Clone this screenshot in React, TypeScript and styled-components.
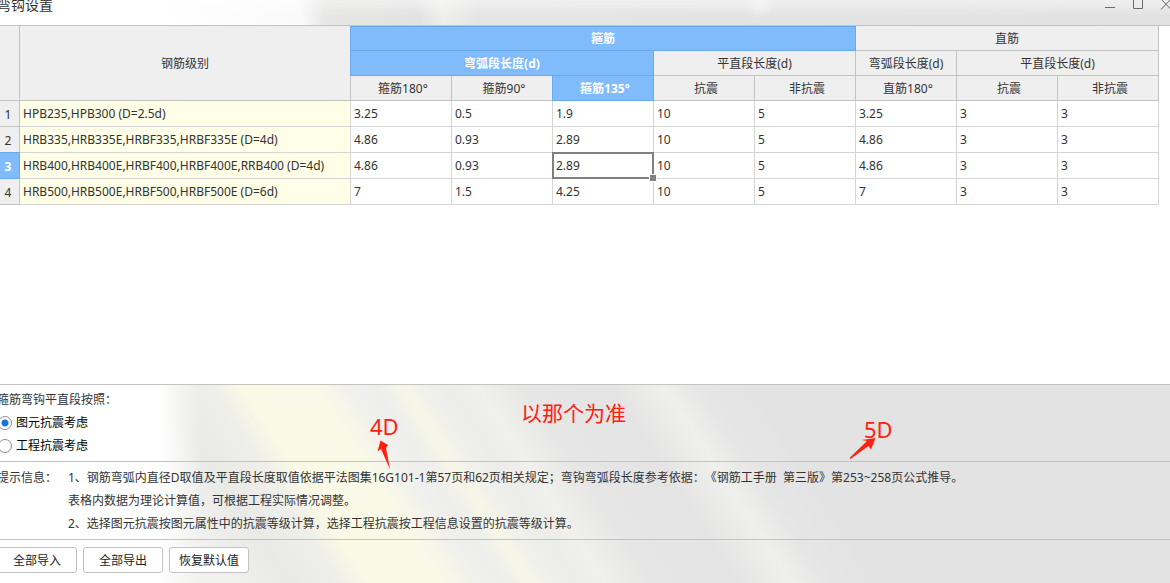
import React, { useState } from "react";
import styled, { createGlobalStyle, css } from "styled-components";

const GlobalStyle = createGlobalStyle`
  * { box-sizing: border-box; }
  body {
    margin: 0;
    overflow: hidden;
    background: #fff;
    color: #333;
    font: 12px/23px "Noto Sans", "Noto Sans CJK SC", sans-serif;
    text-spacing-trim: space-all;
  }
`;

/* The dialog reaches slightly past the top and left screen edges. */
const Dialog = styled.div`
  display: flex;
  flex-direction: column;
  margin: -5px 0 0 -3px;
  min-height: calc(100vh + 5px);
`;

const TitleBar = styled.header`
  display: flex;
  justify-content: space-between;
  align-items: flex-start;
  height: 31px;
  overflow: hidden;
  border-bottom: 1px solid #c3c3c3;
  background:
    radial-gradient(circle 16px at 65% 8px, #f4f4f4, transparent),
    linear-gradient(to bottom, rgba(255, 255, 255, 0.6), transparent 70%),
    linear-gradient(80deg, #fff 14%, #fafafa 26%, #e6e6e4 28%, #e2e2e2 36%, #efefec 38%, #e4e4e4 41%, #e2e2e2);
`;

const Title = styled.h1`
  margin: 0;
  font-size: 14px;
  line-height: 20px;
  font-weight: 400;
`;

const WindowControls = styled.div`
  display: flex;
  margin-right: -10px;
`;

const ControlButton = styled.button`
  width: 28px;
  height: 20px;
  padding: 0;
  border: 0;
  background: none;
  svg { display: block; }
`;

const TableArea = styled.main`
  flex: 1;
  padding-right: 11px;
  background: #fff;
`;

const Grid = styled.table`
  width: 100%;
  table-layout: fixed;
  border-collapse: separate;
  border-spacing: 0;
  line-height: 20px;
`;

const NumberCol = styled.col`width: 23px;`;
const ValueCol = styled.col`width: 101px;`;

const activeHeader = css`
  position: relative;
  background: #80bbfb;
  border-color: #67a9ec;
  color: #fff;
  font-weight: 700;
`;

const HeadCell = styled.th<{ $active?: boolean; $top?: boolean; $leaf?: boolean }>`
  height: 25px;
  padding: 2px 0 0 ${(p) => (p.$leaf ? 4 : 0)}px;
  border: solid #c3c3c3;
  border-width: 0 1px 1px 0;
  background: #efefef;
  font-weight: 400;
  ${(p) => p.$active && activeHeader}
  ${(p) => p.$active && css`box-shadow: -1px 0 0 #67a9ec${p.$top ? ", inset 0 1px 0 #67a9ec" : ""};`}
`;

const RowNumber = styled.th<{ $active?: boolean }>`
  height: 26px;
  padding: 2px 0 0;
  border: solid #c3c3c3;
  border-width: 0 1px 1px 0;
  background: #efefef;
  font-weight: 400;
  ${(p) => p.$active && activeHeader}
  ${(p) => p.$active && css`box-shadow: 0 -1px 0 #67a9ec;`}
`;

const Cell = styled.td<{ $name?: boolean; $selected?: boolean }>`
  height: 26px;
  padding: 0 3px;
  border: solid #d5d5d5;
  border-width: 0 1px 1px 0;
  background: ${(p) => (p.$name ? "#fffee6" : "#fff")};
  white-space: nowrap;
  ${(p) =>
    p.$selected &&
    css`
      position: relative;
      &::before {
        content: "";
        position: absolute;
        inset: -1px;
        border: 2px solid #808080;
      }
      &::after {
        content: "";
        position: absolute;
        right: -4px;
        bottom: -4px;
        width: 6px;
        height: 6px;
        border: 1px solid #fff;
        background: #808080;
      }
    `}
`;

const LowerPanel = styled.div`
  position: relative;
  background:
    linear-gradient(to right, #fff 160px, rgba(255, 255, 255, 0) 205px),
    linear-gradient(57deg, #f0f0ee 200px, #e9e9e6 245px, #eeeeea 285px, #f9f9e6 312px, #f9f9e8 375px,
      #efefed 408px, #eeeeed 425px, #f6f6e7 447px, #efefed 468px, #ececeb 485px, #f0f0ec 510px, #e6e6e6 550px,
      #e4e4e4 620px, #efefed 666px, #e6e6e6 695px, #e3e3e3 740px);
`;

const Section = styled.section`
  border-top: 1px solid #c3c3c3;
`;

const OptionGroup = styled.fieldset`
  margin: 0;
  padding: 3px 0 4px;
  border: 0;
`;

const GroupTitle = styled.legend`
  float: left;
  width: 100%;
  padding: 0;
`;

const Option = styled.label`
  display: flex;
  clear: both;
  align-items: center;
  gap: 4px;
  color: #000;
`;

const Radio = styled.input`
  appearance: none;
  width: 14px;
  height: 14px;
  margin: 0 0 0 1px;
  border: 1px solid #8a8a8a;
  border-radius: 50%;
  background: #fff;
  &:checked {
    background: radial-gradient(circle, #1a73dc 3px, #fff 4px);
  }
`;

const Hints = styled.div`
  display: flex;
  padding: 4px 0;
`;

const HintLabel = styled.div`
  flex: none;
  width: 71px;
`;

const HintLine = styled.p`
  margin: 0;
  white-space: pre-wrap;
`;

const Footer = styled.footer`
  display: flex;
  gap: 6px;
  padding: 7px 0 10px;
`;

const PushButton = styled.button`
  width: 80px;
  height: 26px;
  padding: 2px 0 0;
  border: 1px solid #c3c3c3;
  border-radius: 3px;
  background: #fff;
  color: #222;
  font: inherit;
  line-height: 20px;
`;

const Note = styled.span<{ $x: number; $y: number; $size: number }>`
  position: absolute;
  left: ${(p) => p.$x}px;
  top: ${(p) => p.$y}px;
  font-size: ${(p) => p.$size}px;
  line-height: 28px;
  color: #ff2010;
  white-space: nowrap;
`;

const Arrows = styled.svg`
  position: absolute;
  left: 3px;
  top: 0;
  pointer-events: none;
`;

const rows = [
  ["HPB235,HPB300 (D=2.5d)", "3.25", "0.5", "1.9", "10", "5", "3.25", "3", "3"],
  ["HRB335,HRB335E,HRBF335,HRBF335E (D=4d)", "4.86", "0.93", "2.89", "10", "5", "4.86", "3", "3"],
  ["HRB400,HRB400E,HRBF400,HRBF400E,RRB400 (D=4d)", "4.86", "0.93", "2.89", "10", "5", "4.86", "3", "3"],
  ["HRB500,HRB500E,HRBF500,HRBF500E (D=6d)", "7", "1.5", "4.25", "10", "5", "7", "3", "3"],
];

const selected = { row: 2, col: 3 };
const subHeads = ["箍筋180°", "箍筋90°", "箍筋135°", "抗震", "非抗震", "直筋180°", "抗震", "非抗震"];
const options = ["图元抗震考虑", "工程抗震考虑"];

export default function App() {
  const [choice, setChoice] = useState(0);

  return (
    <>
      <GlobalStyle />
      <Dialog>
        <TitleBar>
          <Title>弯钩设置</Title>
          <WindowControls>
            <ControlButton aria-label="最小化">
              <svg width="28" height="20" stroke="#6b6b6b"><path d="M9 12.5h10" /></svg>
            </ControlButton>
            <ControlButton aria-label="最大化">
              <svg width="28" height="20" fill="none" stroke="#6b6b6b"><path d="M9.500 3.500h9v10h-9z" /></svg>
            </ControlButton>
            <ControlButton aria-label="关闭">
              <svg width="28" height="20" stroke="#6b6b6b"><path d="M9 4l10 10.500M19 4L9 14.500" /></svg>
            </ControlButton>
          </WindowControls>
        </TitleBar>

        <TableArea>
          <Grid>
            <colgroup>
              <NumberCol />
              <col />
              {subHeads.map((_, i) => <ValueCol key={i} />)}
            </colgroup>
            <thead>
              <tr>
                <HeadCell rowSpan={3} />
                <HeadCell rowSpan={3}>钢筋级别</HeadCell>
                <HeadCell colSpan={5} $active $top>箍筋</HeadCell>
                <HeadCell colSpan={3}>直筋</HeadCell>
              </tr>
              <tr>
                <HeadCell colSpan={3} $active>弯弧段长度(d)</HeadCell>
                <HeadCell colSpan={2}>平直段长度(d)</HeadCell>
                <HeadCell>弯弧段长度(d)</HeadCell>
                <HeadCell colSpan={2}>平直段长度(d)</HeadCell>
              </tr>
              <tr>
                {subHeads.map((h, i) => <HeadCell key={i} $leaf $active={i + 1 === selected.col}>{h}</HeadCell>)}
              </tr>
            </thead>
            <tbody>
              {rows.map((row, r) => (
                <tr key={r}>
                  <RowNumber scope="row" $active={r === selected.row}>{r + 1}</RowNumber>
                  {row.map((value, c) => (
                    <Cell key={c} $name={c === 0} $selected={r === selected.row && c === selected.col}>
                      {value}
                    </Cell>
                  ))}
                </tr>
              ))}
            </tbody>
          </Grid>
        </TableArea>

        <LowerPanel>
          <Section>
            <OptionGroup>
              <GroupTitle>箍筋弯钩平直段按照：</GroupTitle>
              {options.map((text, i) => (
                <Option key={text}>
                  <Radio type="radio" name="seismic" checked={choice === i} onChange={() => setChoice(i)} />
                  {text}
                </Option>
              ))}
            </OptionGroup>
          </Section>
          <Section>
            <Hints>
              <HintLabel>提示信息：</HintLabel>
              <div>
                <HintLine>1、钢筋弯弧内直径D取值及平直段长度取值依据平法图集16G101-1第57页和62页相关规定；弯钩弯弧段长度参考依据：《钢筋工手册  第三版》第253~258页公式推导。</HintLine>
                <HintLine>表格内数据为理论计算值，可根据工程实际情况调整。</HintLine>
                <HintLine>2、选择图元抗震按图元属性中的抗震等级计算，选择工程抗震按工程信息设置的抗震等级计算。</HintLine>
              </div>
            </Hints>
          </Section>
          <Section>
            <Footer>
              <PushButton>全部导入</PushButton>
              <PushButton>全部导出</PushButton>
              <PushButton>恢复默认值</PushButton>
            </Footer>
          </Section>

          <Note $x={373} $y={28} $size={22}>4D</Note>
          <Note $x={524} $y={15} $size={21}>以那个为准</Note>
          <Note $x={867} $y={31} $size={22}>5D</Note>
          <Arrows width="900" height="90" fill="#ff2010" aria-hidden="true">
            <path d="M380.500 56.500L388 61L386 64L390 85.500L381 65L377.500 67.500z" />
            <path d="M875.500 54L871 65.500L868.500 62L850.500 75L849.500 74L867 57L862 56z" />
          </Arrows>
        </LowerPanel>
      </Dialog>
    </>
  );
}
